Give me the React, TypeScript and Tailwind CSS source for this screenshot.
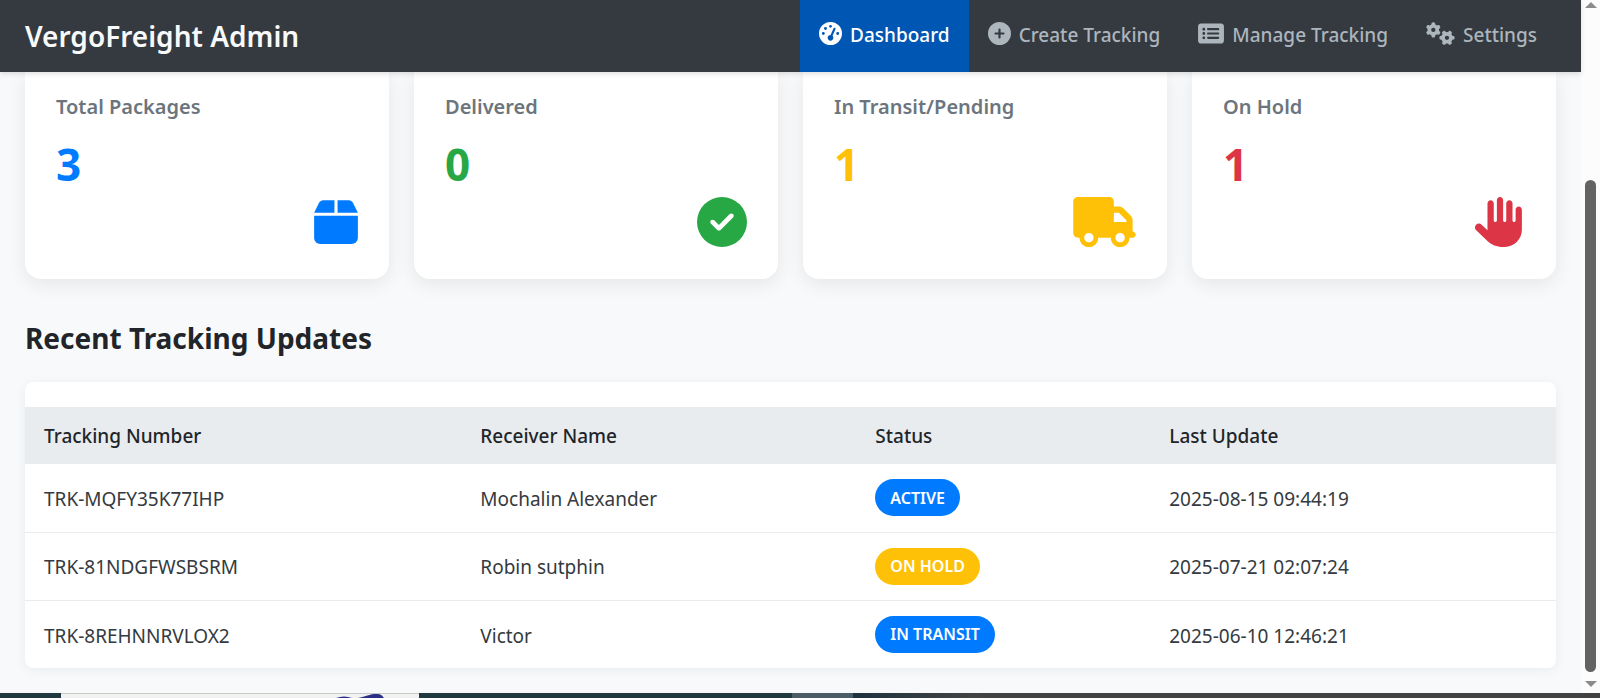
import type { IconType } from "react-icons";
import {
  FaBox,
  FaCircleCheck,
  FaCirclePlus,
  FaGaugeHigh,
  FaGears,
  FaHand,
  FaRectangleList,
  FaTruck,
} from "react-icons/fa6";

type NavItem = { label: string; icon: IconType; iconWidth: string; active?: boolean };
type Stat = { label: string; value: number; icon: IconType; iconWidth: string; color: string };
type Update = {
  tracking: string;
  receiver: string;
  status: string;
  badge: string;
  updated: string;
};

const navItems: NavItem[] = [
  { label: "Dashboard", icon: FaGaugeHigh, iconWidth: "w-[23px]", active: true },
  { label: "Create Tracking", icon: FaCirclePlus, iconWidth: "w-[23px]" },
  { label: "Manage Tracking", icon: FaRectangleList, iconWidth: "w-[26px]" },
  { label: "Settings", icon: FaGears, iconWidth: "w-[29px]" },
];

const stats: Stat[] = [
  { label: "Total Packages", value: 3, icon: FaBox, iconWidth: "w-[44px]", color: "text-[#007bff]" },
  { label: "Delivered", value: 0, icon: FaCircleCheck, iconWidth: "w-[50px]", color: "text-[#28a745]" },
  { label: "In Transit/Pending", value: 1, icon: FaTruck, iconWidth: "w-[63px]", color: "text-[#ffc107]" },
  { label: "On Hold", value: 1, icon: FaHand, iconWidth: "w-[50px]", color: "text-[#dc3545]" },
];

const updates: Update[] = [
  {
    tracking: "TRK-MQFY35K77IHP",
    receiver: "Mochalin Alexander",
    status: "ACTIVE",
    badge: "bg-[#007bff]",
    updated: "2025-08-15 09:44:19",
  },
  {
    tracking: "TRK-81NDGFWSBSRM",
    receiver: "Robin sutphin",
    status: "ON HOLD",
    badge: "bg-[#ffc107]",
    updated: "2025-07-21 02:07:24",
  },
  {
    tracking: "TRK-8REHNNRVLOX2",
    receiver: "Victor",
    status: "IN TRANSIT",
    badge: "bg-[#007bff]",
    updated: "2025-06-10 12:46:21",
  },
];

function Header() {
  return (
    <header className="relative z-10 flex h-[72px] items-stretch justify-between bg-[#343a40] px-[25px] shadow-[0_2px_5px_rgba(0,0,0,0.12)]">
      <div className="flex items-center text-[28px] font-semibold whitespace-nowrap text-[#f8f9fa]">
        VergoFreight Admin
      </div>
      <nav className="flex">
        {navItems.map(({ label, icon: Icon, iconWidth, active }) => (
          <a
            key={label}
            href="#"
            aria-current={active ? "page" : undefined}
            className={
              active
                ? "flex items-center gap-2 bg-[#0056b3] px-[19px] pb-[2px] text-[19px] font-medium whitespace-nowrap text-white"
                : "flex items-center gap-2 px-[19px] pb-[2px] text-[19px] font-medium whitespace-nowrap text-[#adb5bd]"
            }
          >
            <Icon className={`mb-1 h-[23px] shrink-0 ${iconWidth}`} aria-hidden="true" />
            {label}
          </a>
        ))}
      </nav>
    </header>
  );
}

function StatCard({ label, value, icon: Icon, iconWidth, color }: Stat) {
  return (
    <div className="flex flex-col rounded-b-2xl bg-white px-[31px] pt-[21px] pb-8 shadow-[0_5px_19px_rgba(0,0,0,0.08)]">
      <h3 className="text-[20px] leading-7 font-semibold text-[#6c757d]">{label}</h3>
      <p className={`mt-[15px] text-[44px] leading-[56px] font-bold ${color}`}>{value}</p>
      <Icon className={`mt-[5px] h-[50px] self-end ${iconWidth} ${color}`} aria-hidden="true" />
    </div>
  );
}

function UpdatesTable() {
  return (
    <section className="mt-[39px]">
      <h2 className="text-[28px] leading-10 font-bold text-[#212529]">Recent Tracking Updates</h2>
      <div className="mt-6 overflow-hidden rounded-lg bg-white pt-[25px] shadow-[0_2px_12px_rgba(0,0,0,0.06)]">
        <table className="w-full table-fixed text-left text-[19px] text-[#343a40]">
          <colgroup>
            <col className="w-[28.5%]" />
            <col className="w-[25.8%]" />
            <col className="w-[19.2%]" />
            <col className="w-[26.5%]" />
          </colgroup>
          <thead className="bg-[#e9ecef]">
            <tr className="h-[57px]">
              {["Tracking Number", "Receiver Name", "Status", "Last Update"].map((h) => (
                <th key={h} scope="col" className="px-[19px] pt-[2px] font-medium text-[#212529]">
                  {h}
                </th>
              ))}
            </tr>
          </thead>
          <tbody>
            {updates.map((u) => (
              <tr key={u.tracking} className="h-[68px] border-b border-[#e9ecef] last:border-b-0">
                <td className="px-[19px] pt-[3px]">{u.tracking}</td>
                <td className="px-[19px] pt-[3px]">{u.receiver}</td>
                <td className="px-[19px]">
                  <span
                    className={`inline-flex h-[37px] items-center rounded-full px-[15px] text-[16px] font-semibold text-white ${u.badge}`}
                  >
                    {u.status}
                  </span>
                </td>
                <td className="px-[19px] pt-[3px]">{u.updated}</td>
              </tr>
            ))}
          </tbody>
        </table>
      </div>
    </section>
  );
}

function ScrollTrack() {
  return (
    <div className="flex w-[19px] shrink-0 flex-col items-center bg-[#fcfcfc] pt-[2px] pb-[6px]" aria-hidden="true">
      <svg className="h-[6px] w-3" viewBox="0 0 12 6">
        <path d="M0 6 6 0l6 6z" fill="#8b8b8b" />
      </svg>
      <div className="mt-[172px] mb-[9px] w-[11px] grow rounded-full bg-[#636363]" />
      <svg className="h-[6px] w-3" viewBox="0 0 12 6">
        <path d="M0 0h12L6 6z" fill="#8b8b8b" />
      </svg>
    </div>
  );
}

function DesktopStrip() {
  return (
    <div className="flex h-[5px] shrink-0" aria-hidden="true">
      <div className="w-[3.8%] bg-[#203840]" />
      <div className="flex w-[22.4%] justify-end border-t border-[#c8c8c4] bg-[#f2f2f2] pr-[33px]">
        <svg className="h-1 w-[50px]" viewBox="0 0 50 4">
          <path d="M0 4Q8 1 16 4zM22 4C32 2 34 0 40 0S46 2 48 4z" fill="#2b2f86" />
        </svg>
      </div>
      <div className="w-[23.3%] bg-[#203840]" />
      <div className="w-[3.8%] bg-[#4b5c65]" />
      <div className="w-[8%] bg-linear-to-r from-[#1d3340] to-[#444444]" />
      <div className="grow bg-[#424242]" />
    </div>
  );
}

export default function App() {
  return (
    <div className="flex min-h-screen flex-col bg-[#f8f9fa] font-['Noto_Sans','Open_Sans',sans-serif]">
      <div className="flex grow">
        <div className="min-w-0 grow">
          <Header />
          <main className="px-[25px] pb-6">
            <div className="grid grid-cols-4 gap-[25px]">
              {stats.map((s) => (
                <StatCard key={s.label} {...s} />
              ))}
            </div>
            <UpdatesTable />
          </main>
        </div>
        <ScrollTrack />
      </div>
      <DesktopStrip />
    </div>
  );
}
